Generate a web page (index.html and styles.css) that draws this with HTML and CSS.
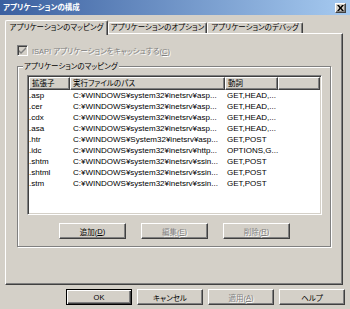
FILE: index.html
```html
<!DOCTYPE html>
<html lang="ja">
<head>
<meta charset="utf-8">
<title>アプリケーションの構成</title>
<link rel="stylesheet" href="styles.css">
</head>
<body>
<div class="window">
  <div class="titlebar">
    <span class="title">アプリケーションの構成</span>
    <span class="close"><svg width="7" height="6" viewBox="0 0 7 6"><path d="M0 0h2l1.5 2L5 0h2L4.5 3 7 6H5L3.5 4 2 6H0l2.5-3z" fill="#000"/></svg></span>
  </div>
  <div class="tabs">
    <div class="tab tab-active tab-map">アプリケーションのマッピング</div>
    <div class="tab tab-opt">アプリケーションのオプション</div>
    <div class="tab tab-dbg">アプリケーションのデバッグ</div>
  </div>
  <div class="panel">
    <div class="check disabled">
      <span class="box"><svg width="7" height="7" viewBox="0 0 7 7"><path d="M0 3l2 2 5-5v2L2 7 0 5z" fill="#808080"/></svg></span>
      <span class="check-label">ISAPI アプリケーションをキャッシュする(<u>C</u>)</span>
    </div>
    <div class="group">
      <span class="group-label">アプリケーションのマッピング</span>
      <div class="list">
        <div class="list-header">
          <div class="hcell col-ext">拡張子</div>
          <div class="hcell col-path">実行ファイルのパス</div>
          <div class="hcell col-verb">動詞</div>
          <div class="hcell col-rest"></div>
        </div>
        <div class="row"><span class="col-ext">.asp</span><span class="col-path">C:¥WINDOWS¥system32¥inetsrv¥asp...</span><span class="col-verb">GET,HEAD,...</span></div>
        <div class="row"><span class="col-ext">.cer</span><span class="col-path">C:¥WINDOWS¥system32¥inetsrv¥asp...</span><span class="col-verb">GET,HEAD,...</span></div>
        <div class="row"><span class="col-ext">.cdx</span><span class="col-path">C:¥WINDOWS¥system32¥inetsrv¥asp...</span><span class="col-verb">GET,HEAD,...</span></div>
        <div class="row"><span class="col-ext">.asa</span><span class="col-path">C:¥WINDOWS¥system32¥inetsrv¥asp...</span><span class="col-verb">GET,HEAD,...</span></div>
        <div class="row"><span class="col-ext">.htr</span><span class="col-path">C:¥WINDOWS¥System32¥inetsrv¥asp...</span><span class="col-verb">GET,POST</span></div>
        <div class="row"><span class="col-ext">.idc</span><span class="col-path">C:¥WINDOWS¥system32¥inetsrv¥http...</span><span class="col-verb">OPTIONS,G...</span></div>
        <div class="row"><span class="col-ext">.shtm</span><span class="col-path">C:¥WINDOWS¥system32¥inetsrv¥ssin...</span><span class="col-verb">GET,POST</span></div>
        <div class="row"><span class="col-ext">.shtml</span><span class="col-path">C:¥WINDOWS¥system32¥inetsrv¥ssin...</span><span class="col-verb">GET,POST</span></div>
        <div class="row"><span class="col-ext">.stm</span><span class="col-path">C:¥WINDOWS¥system32¥inetsrv¥ssin...</span><span class="col-verb">GET,POST</span></div>
      </div>
      <div class="group-buttons">
        <span class="btn">追加(<u>D</u>)</span>
        <span class="btn disabled">編集(<u>E</u>)</span>
        <span class="btn disabled">削除(<u>R</u>)</span>
      </div>
    </div>
  </div>
  <div class="footer">
    <span class="btn btn-default">OK</span>
    <span class="btn">キャンセル</span>
    <span class="btn disabled">適用(<u>A</u>)</span>
    <span class="btn">ヘルプ</span>
  </div>
</div>
</body>
</html>
```
FILE: styles.css
```css
* { box-sizing: border-box; }
html, body { margin: 0; padding: 0; }
body {
  width: 350px;
  height: 309px;
  overflow: hidden;
  background: #d4d0c8;
  font-family: "Liberation Sans", "Noto Sans CJK JP", sans-serif;
  font-size: 7.5px;
  font-feature-settings: "palt";
  color: #000;
}
.window { width: 350px; height: 309px; }

.titlebar {
  height: 15px;
  display: flex;
  align-items: center;
  justify-content: space-between;
  padding: 0 4px 0 3px;
  background: linear-gradient(to right, #3a5f9f, #a6caf0);
}
.title { color: #fff; font-weight: bold; line-height: 15px; }
.close {
  width: 11px;
  height: 10px;
  display: flex;
  align-items: center;
  justify-content: center;
  background: #d4d0c8;
  border: 1px solid;
  border-color: #fff #404040 #404040 #fff;
  box-shadow: inset -1px -1px #808080;
}

.tabs {
  display: flex;
  align-items: flex-end;
  height: 16px;
  margin-top: 2px;
  padding-left: 5px;
}
.tab {
  height: 11px;
  line-height: 10px;
  text-align: center;
  white-space: nowrap;
  border-top: 1px solid #fff;
  border-left: 1px solid #fff;
  border-right: 1px solid #404040;
  border-radius: 2px 2px 0 0;
  box-shadow: inset -1px 0 #808080;
}
.tab-active {
  height: 15px;
  line-height: 13px;
  margin-bottom: -2px;
  position: relative;
  z-index: 1;
  background: #d4d0c8;
}
.tab-map { width: 103px; }
.tab-opt { width: 99px; }
.tab-dbg { width: 96px; }

.panel {
  width: 338px;
  height: 252px;
  margin-left: 5px;
  padding: 11px 0 0 11px;
  border: 1px solid;
  border-color: #fff #404040 #404040 #fff;
  box-shadow: inset -1px -1px #808080;
}

.check { display: flex; align-items: center; gap: 4px; height: 11px; }
.box {
  width: 11px;
  height: 11px;
  display: flex;
  align-items: center;
  justify-content: center;
  border: 1px solid;
  border-color: #808080 #fff #fff #808080;
  box-shadow: inset 1px 1px #404040;
  background: #d4d0c8;
}
.disabled { color: #808080; text-shadow: 1px 1px 0 #fff; }

.group {
  position: relative;
  width: 314px;
  height: 181px;
  margin-top: 10px;
  padding: 8px 8px 0 9px;
  border: 1px solid #808080;
  box-shadow: inset 1px 1px #fff, 1px 1px #fff;
}
.group-label {
  position: absolute;
  top: -6px;
  left: 5px;
  padding: 0 1px;
  line-height: 11px;
  background: #d4d0c8;
}

.list {
  width: 295px;
  height: 140px;
  background: #fff;
  border: 1px solid;
  border-color: #808080 #fff #fff #808080;
  box-shadow: inset 1px 1px #404040, inset -1px -1px #d4d0c8;
  padding: 1px;
}
.list-header { display: flex; height: 13px; }
.hcell {
  height: 13px;
  line-height: 11px;
  padding-left: 2px;
  background: #d4d0c8;
  border: 1px solid;
  border-color: #fff #404040 #404040 #fff;
  box-shadow: inset -1px -1px #808080;
  white-space: nowrap;
}
.list-header .col-ext { width: 41px; }
.list-header .col-path { width: 155px; }
.list-header .col-verb { width: 53px; }
.list-header .col-rest { width: 42px; }

.row { display: flex; height: 11px; line-height: 11px; white-space: nowrap; font-size: 8px; }
.row .col-ext { width: 41px; padding-left: 0; }
.row .col-path { width: 155px; padding-left: 3px; }
.row .col-verb { width: 53px; padding-left: 2px; }

.group-buttons {
  display: flex;
  justify-content: center;
  gap: 15px;
  margin-top: 8px;
}

.btn {
  width: 67px;
  height: 16px;
  display: flex;
  align-items: center;
  justify-content: center;
  border: 1px solid;
  border-color: #fff #404040 #404040 #fff;
  box-shadow: inset -1px -1px #808080;
  white-space: nowrap;
}
.btn-default {
  border-color: #000;
  box-shadow: inset 1px 1px #fff, inset -1px -1px #404040, inset -2px -2px #808080;
}

.footer {
  display: flex;
  justify-content: flex-end;
  gap: 5px;
  padding: 4px 5px 0 0;
}
.footer .btn { width: 66px; }
```
